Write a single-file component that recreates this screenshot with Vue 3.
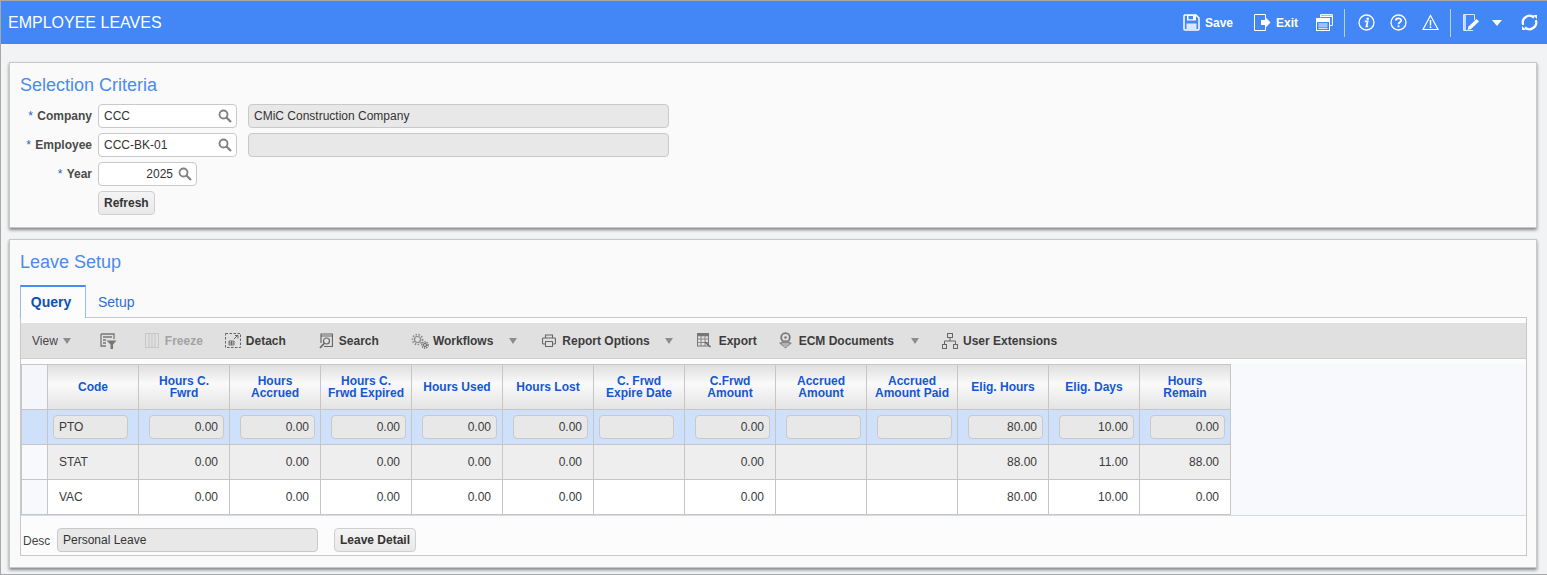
<script setup>
const cols = [
  { t: ['Code'] },
  { t: ['Hours C.', 'Fwrd'] },
  { t: ['Hours', 'Accrued'] },
  { t: ['Hours C.', 'Frwd Expired'] },
  { t: ['Hours Used'] },
  { t: ['Hours Lost'] },
  { t: ['C. Frwd', 'Expire Date'] },
  { t: ['C.Frwd', 'Amount'] },
  { t: ['Accrued', 'Amount'] },
  { t: ['Accrued', 'Amount Paid'] },
  { t: ['Elig. Hours'] },
  { t: ['Elig. Days'] },
  { t: ['Hours', 'Remain'] },
]
const rows = [
  { cls: 'sel', v: ['PTO', '0.00', '0.00', '0.00', '0.00', '0.00', '', '0.00', '', '', '80.00', '10.00', '0.00'] },
  { cls: 'alt', v: ['STAT', '0.00', '0.00', '0.00', '0.00', '0.00', '', '0.00', '', '', '88.00', '11.00', '88.00'] },
  { cls: 'plain', v: ['VAC', '0.00', '0.00', '0.00', '0.00', '0.00', '', '0.00', '', '', '80.00', '10.00', '0.00'] },
]
</script>

<template>
  <div class="page">
    <header class="top">
      <h1 class="title">EMPLOYEE LEAVES</h1>
      <div class="actions">
        <button class="act save">
          <svg width="17" height="17" viewBox="0 0 17 17"><path d="M1.700 1H13L16 4V15Q16 16 15 16H2Q1 16 1 15V1.700Z" fill="none" stroke="#fff" stroke-width="1.500"/><path d="M4 1H13V6.500H4Z" fill="#fff"/><rect x="5.500" y="2" width="4.500" height="3.300" fill="#4287f5"/><rect x="3.500" y="9.500" width="10" height="6" fill="#dbe7fd"/></svg>
          <span>Save</span>
        </button>
        <button class="act exit">
          <svg width="17" height="17" viewBox="0 0 17 17"><path d="M11.500 5V.5H.5V16.500H11.500V12" fill="none" stroke="#fff" stroke-width="1"/><path d="M7 6H11V2.800L16.500 8.500L11 14.200V11H7Z" fill="#fff"/></svg>
          <span>Exit</span>
        </button>
        <svg class="ic windows" width="17" height="17" viewBox="0 0 17 17"><path d="M4.500 3.500V.6H16.400V11.500H13.500" fill="none" stroke="#fff"/><path d="M4.500 2.300H16" stroke="#fff" stroke-width="1.500"/><rect x=".5" y="4.500" width="13" height="12" fill="#4287f5" stroke="#fff"/><path d="M.5 5.500H13.500V7.500H.5ZM2.500 10H11.500M2.500 12H11.500M2.500 14.300H11.500" fill="#fff" stroke="#fff" stroke-width="1"/></svg>
        <span class="vsep first"></span>
        <svg class="ic info" width="17" height="17" viewBox="0 0 17 17"><circle cx="8.500" cy="8.500" r="7.500" fill="none" stroke="#fff" stroke-width="1.300"/><circle cx="9.700" cy="4.700" r="1.300" fill="#fff"/><path d="M6.800 7.400H9.700L8.400 12.500H10.200" fill="none" stroke="#fff" stroke-width="1.700"/></svg>
        <svg class="ic help" width="17" height="17" viewBox="0 0 17 17"><circle cx="8.500" cy="8.500" r="7.500" fill="none" stroke="#fff" stroke-width="1.300"/><path d="M5.800 6.600C5.800 3.600 11.200 3.600 11.200 6.500C11.200 8.300 8.500 8.300 8.500 10.300" fill="none" stroke="#fff" stroke-width="1.700"/><rect x="7.600" y="11.400" width="1.800" height="1.800" fill="#fff"/></svg>
        <svg class="ic warn" width="17" height="17" viewBox="0 0 17 17"><path d="M8.500 1.500L16 15.500H1Z" fill="none" stroke="#fff" stroke-width="1.200"/><path d="M8.500 6V11.500" stroke="#fff" stroke-width="1.500"/><rect x="7.700" y="12.400" width="1.600" height="1.600" fill="#fff"/></svg>
        <span class="vsep second"></span>
        <svg class="ic note" width="17" height="17" viewBox="0 0 17 17"><path d="M10 16.500H.5V.5H11.500V6" fill="none" stroke="#dbe7fd"/><path d="M1 1H3V16H1Z" fill="#c3d8fb"/><path d="M4.500 16L5.500 12.500L13.500 5L16 7.500L8 15Z" fill="#fff"/></svg>
        <span class="caret-w"></span>
        <svg class="ic sync" width="17" height="17" viewBox="0 0 17 17"><path d="M2.200 10.800A6.700 6.700 0 0 1 13 3.600M14.800 6.200A6.700 6.700 0 0 1 4 13.400" fill="none" stroke="#fff" stroke-width="2.200"/><path d="M12 1H16V5ZM5 16H1V12Z" fill="#fff"/></svg>
      </div>
    </header>

    <main class="body">
      <section class="panel crit">
        <h2 class="heading">Selection Criteria</h2>
        <div class="form">
          <label class="lbl"><i>*</i> Company</label>
          <div class="line">
            <div class="inp lov w139"><span>CCC</span><svg class="mag" width="14" height="14" viewBox="0 0 14 14"><circle cx="5.500" cy="5.500" r="4" fill="none" stroke="#808080" stroke-width="1.800"/><path d="M8.500 8.500L13 13" stroke="#808080" stroke-width="2.200"/></svg></div>
            <div class="inp ro w421">CMiC Construction Company</div>
          </div>
          <label class="lbl"><i>*</i> Employee</label>
          <div class="line">
            <div class="inp lov w139"><span>CCC-BK-01</span><svg class="mag" width="14" height="14" viewBox="0 0 14 14"><circle cx="5.500" cy="5.500" r="4" fill="none" stroke="#808080" stroke-width="1.800"/><path d="M8.500 8.500L13 13" stroke="#808080" stroke-width="2.200"/></svg></div>
            <div class="inp ro w421"></div>
          </div>
          <label class="lbl"><i>*</i> Year</label>
          <div class="line">
            <div class="inp lov w99 num"><span>2025</span><svg class="mag" width="14" height="14" viewBox="0 0 14 14"><circle cx="5.500" cy="5.500" r="4" fill="none" stroke="#808080" stroke-width="1.800"/><path d="M8.500 8.500L13 13" stroke="#808080" stroke-width="2.200"/></svg></div>
          </div>
          <span></span>
          <div class="line"><button class="btn">Refresh</button></div>
        </div>
      </section>

      <section class="panel setup">
        <h2 class="heading">Leave Setup</h2>
        <div class="tabs">
          <div class="tab on">Query</div>
          <div class="tab">Setup</div>
        </div>
        <div class="box">
          <div class="bar">
            <span class="ti view">View <b class="caret"></b></span>
            <span class="tsep s0"></span>
            <svg class="ti tfilter" width="17" height="16" viewBox="0 0 17 16"><path d="M1 1H14V6M1 1V13H6M3 4H12M3 7H6M3 10H6" stroke="#777" stroke-width="1.300" fill="none"/><path d="M6.500 7.500H16.500L13 11.500V16H10.500V11.500Z" fill="#777"/></svg>
            <span class="tsep s3"></span>
            <span class="ti dis"><svg width="14" height="15" viewBox="0 0 14 15"><rect x=".5" y=".5" width="13" height="14" fill="none" stroke="#c8c8c8"/><path d="M4 1V14M7 1V14M10 1V14" stroke="#cdcdcd" stroke-width="1.400"/></svg>Freeze</span>
            <span class="ti det"><svg width="16" height="15" viewBox="0 0 16 15"><rect x=".5" y=".5" width="15" height="14" fill="none" stroke="#666" stroke-dasharray="2.500 1.500"/><path d="M4 8H9V12H4ZM4 10H9M6.500 8V12" fill="none" stroke="#666" stroke-width=".9"/><path d="M9 6L12.500 2.500M10 2.500H13V5.500" fill="none" stroke="#666"/></svg>Detach</span>
            <span class="tsep s1"></span>
            <span class="ti srch"><svg width="14" height="16" viewBox="0 0 14 16"><path d="M2 10V1H13.500V13.500H5" fill="none" stroke="#666" stroke-width="1.200"/><path d="M2 3H13.500" stroke="#666"/><circle cx="7.500" cy="8" r="3" fill="none" stroke="#666" stroke-width="1.200"/><path d="M5 10.500L1 15" stroke="#666" stroke-width="1.700"/></svg>Search</span>
            <span class="tsep s2"></span>
            <span class="ti wf"><svg width="18" height="16" viewBox="0 0 18 16"><g fill="none" stroke="#8a8a8a"><circle cx="6.500" cy="6.500" r="3" stroke-width="1.200"/><circle cx="6.500" cy="6.500" r="5" stroke-width="1.700" stroke-dasharray="1.500 1.500"/><circle cx="14" cy="12" r="1.500" stroke="#666"/><circle cx="14" cy="12" r="3" stroke="#666" stroke-width="1.500" stroke-dasharray="1.200 1"/></g></svg>Workflows</span>
            <b class="caret cw"></b>
            <span class="ti rep"><svg width="14" height="13" viewBox="0 0 14 13"><path d="M3.500 4V1H10.500V4M3.500 10H1.500Q.5 10 .5 9V5Q.5 4 1.500 4H12.500Q13.500 4 13.500 5V9Q13.500 10 12.500 10H10.500" fill="none" stroke="#666" stroke-width="1.100"/><rect x="3.500" y="7.500" width="7" height="5" fill="none" stroke="#666"/></svg>Report Options</span>
            <b class="caret cr"></b>
            <span class="ti exp"><svg width="14" height="15" viewBox="0 0 14 15"><rect x=".5" y=".5" width="11" height="12.500" fill="none" stroke="#777"/><path d="M.5 2H11.500" stroke="#777" stroke-width="2.500"/><path d="M4 3V13M8 3V13M1 6H11M1 9.500H11" stroke="#777" stroke-width=".8"/><path d="M8 9L13.500 14" stroke="#666" stroke-width="1.500"/></svg>Export</span>
            <span class="ti ecm"><svg width="15" height="17" viewBox="0 0 15 17"><circle cx="7.500" cy="5.500" r="4.300" fill="#e0e0e0" stroke="#777" stroke-width="1.800"/><circle cx="7.500" cy="5.500" r="1.300" fill="#777"/><path d="M1 11L7.500 8L14 11L7.500 16.500Z" fill="#888"/><path d="M4 12H11M5.500 14H9.500" stroke="#ddd"/></svg>ECM Documents</span>
            <b class="caret ce"></b>
            <span class="ti ue"><svg width="16" height="16" viewBox="0 0 16 16"><g fill="none" stroke="#666"><rect x="5.500" y=".5" width="5" height="4"/><rect x=".5" y="11.500" width="4" height="4"/><rect x="11.500" y="11.500" width="4" height="4"/><path d="M8 4.500V8M2.500 11.500V8H13.500V11.500"/></g></svg>User Extensions</span>
          </div>

          <div class="gridwrap">
            <div class="grid">
              <div class="hc corner"></div>
              <div v-for="(c, i) in cols" :key="i" class="hc"><span v-for="l in c.t" :key="l">{{ l }}</span></div>
              <template v-for="r in rows" :key="r.v[0]">
                <div class="rh" :class="{ rhsel: r.cls === 'sel' }"></div>
                <div v-for="(val, i) in r.v" :key="i" class="cell" :class="[r.cls, i === 0 || i === 6 ? 'left' : 'right']">
                  <div v-if="r.cls === 'sel'" class="ci">{{ val }}</div>
                  <template v-else>{{ val }}</template>
                </div>
              </template>
            </div>
          </div>

          <div class="foot">
            <span class="dl">Desc</span>
            <div class="inp ro w261">Personal Leave</div>
            <button class="btn ld">Leave Detail</button>
          </div>
        </div>
      </section>
    </main>
  </div>
</template>

<style scoped>
.page { width: 1547px; height: 575px; box-sizing: border-box; border-top: 1px solid #a8a8a8; border-left: 1px solid #a8a8a8; border-bottom: 1px solid #a8a8a8; background: #f2f3f5; font-family: "Liberation Sans", Arial, sans-serif; overflow: hidden; color: #333; }
.top { height: 43px; background: #4287f5; display: flex; align-items: center; justify-content: space-between; }
.title { margin: 0 0 0 7px; font-size: 16px; font-weight: 400; color: #fff; }
.actions { display: flex; align-items: center; height: 100%; position: relative; }
.act { display: flex; align-items: center; background: none; border: 0; padding: 0; color: #fff; font: bold 12px "Liberation Sans", sans-serif; }
.act span { margin-left: 5px; }
.save { margin-right: 21px; }
.exit { margin-right: 18px; }
.ic { display: block; flex: none; }
.vsep { width: 1px; height: 28px; background: #b5cffa; flex: none; }
.vsep.first { margin-left: 11px; margin-right: 13px; }
.info { margin-right: 15px; }
.help { margin-right: 15px; }
.vsep.second { margin-left: 11px; margin-right: 12px; }
.caret-w { width: 0; height: 0; border-left: 5px solid transparent; border-right: 5px solid transparent; border-top: 6px solid #fff; margin-left: 12px; margin-right: 19px; }
.sync { margin-right: 9px; }

.body { padding: 18px 10px 0 8px; display: flex; flex-direction: column; gap: 11px; }
.panel { box-sizing: border-box; background: #fafafa; border: 1px solid #c8c8c8; box-shadow: 0 2px 3px rgba(0,0,0,.45); padding: 0 10px; }
.crit { height: 166px; }
.setup { height: 329px; }
.heading { margin: 0; padding-top: 12px; font-size: 18px; font-weight: 400; color: #4a8af4; line-height: 21px; }
.form { display: grid; grid-template-columns: 72px 1fr; column-gap: 6px; row-gap: 5px; margin-top: 8px; }
.lbl { font-size: 12px; font-weight: 700; color: #4a4a4a; text-align: right; line-height: 24px; white-space: nowrap; }
.lbl i { font-style: normal; color: #1f5fc8; font-weight: 400; margin-right: 1px; }
.line { display: flex; gap: 11px; height: 24px; }
.inp { box-sizing: border-box; height: 24px; border: 1px solid #c9c9c9; border-radius: 4px; background: #fff; font-size: 12px; color: #333; line-height: 22px; padding: 0 5px; white-space: nowrap; }
.lov { display: flex; align-items: center; justify-content: space-between; padding-right: 4px; }
.num { justify-content: flex-end; gap: 5px; }
.ro { background: #e8e8e8; }
.w139 { width: 139px; }
.w99 { width: 99px; }
.w421 { width: 421px; }
.w261 { width: 261px; }
.mag { flex: none; }
.btn { box-sizing: border-box; height: 24px; border: 1px solid #cfcfcf; border-radius: 4px; background: linear-gradient(#f4f4f4, #e9e9e9); font: bold 12px "Liberation Sans", sans-serif; color: #333; padding: 0 5px; }

.tabs { display: flex; height: 32px; margin-top: 12px; }
.tab { box-sizing: border-box; font-size: 14px; color: #2c6fd0; padding: 0 12px; line-height: 34px; }
.tab.on { width: 66px; height: 33px; padding: 0 4px 0 0; text-align: center; font-weight: 700; color: #0f4fb4; border-top: 2px solid #4a8af4; border-left: 1px solid #9ab8e8; border-right: 1px solid #9ab8e8; background: #fcfcfc; line-height: 30px; position: relative; z-index: 1; }
.box { box-sizing: border-box; width: 1507px; height: 239px; border: 1px solid #c8c8c8; display: flex; flex-direction: column; background: #fcfcfc; }
.bar { height: 36px; margin-top: 5px; background: #e0e0e0; border-bottom: 1px solid #cfcfcf; box-sizing: border-box; display: flex; align-items: center; font-size: 12px; font-weight: 700; color: #3c3c3c; white-space: nowrap; flex: none; }
.ti { display: flex; align-items: center; flex: none; }
.ti svg { margin-right: 5px; }
.view { font-weight: 400; margin-left: 11px; gap: 5px; color: #444; }
.caret { display: inline-block; width: 0; height: 0; border-left: 4.500px solid transparent; border-right: 4.500px solid transparent; border-top: 6px solid #8c8c8c; flex: none; }
.tsep { width: 1px; height: 32px; background: #dbe1e8; flex: none; }
.tsep.s0 { margin-left: 14px; }
.tfilter { margin-left: 14px; }
.tsep.s3 { margin-left: 10px; }
.dis { color: #a3a3a3; margin-left: 17px; }
.dis svg { margin-right: 6px; }
.det { margin-left: 22px; }
.tsep.s1 { margin-left: 15px; }
.srch { margin-left: 17px; }
.srch svg { margin-right: 6px; }
.tsep.s2 { margin-left: 15px; }
.wf { margin-left: 16px; }
.wf svg { margin-right: 4px; }
.cw { margin-left: 16px; }
.rep { margin-left: 25px; }
.rep svg { margin-right: 6px; }
.cr { margin-left: 15px; }
.exp { margin-left: 24px; }
.exp svg { margin-right: 8px; }
.ecm { margin-left: 21px; }
.ecm svg { margin-right: 6px; }
.ce { margin-left: 17px; }
.ue { margin-left: 23px; }

.gridwrap { margin-top: 5px; height: 152px; background: #f8f9fd; border-bottom: 1px solid #d5dbe5; box-sizing: border-box; flex: none; }
.grid { display: grid; grid-template-columns: 26px repeat(13, 91px); grid-template-rows: 45px 35px 35px 35px; width: max-content; border-left: 1px solid #c6c6c6; border-top: 1px solid #c6c6c6; }
.hc { box-sizing: border-box; background: linear-gradient(#dedede, #fafafa 42%, #e4e4e4); border-right: 1px solid #c6c6c6; border-bottom: 1px solid #c6c6c6; color: #1457d2; font-size: 12px; font-weight: 700; line-height: 12px; display: flex; flex-direction: column; align-items: center; justify-content: center; text-align: center; white-space: nowrap; }
.corner { background: #f5f6fb; }
.rh { box-sizing: border-box; background: #f8f9fd; border-right: 1px solid #c6c6c6; border-bottom: 1px solid #c6c6c6; }
.rhsel { background: #cfe0fa; }
.cell { box-sizing: border-box; border-right: 1px solid #c6c6c6; border-bottom: 1px solid #c6c6c6; font-size: 12px; color: #3a3a3a; display: flex; align-items: center; }
.cell.left { padding-left: 11px; }
.cell.right { justify-content: flex-end; padding-right: 11px; }
.cell.sel { background: #cfe0fa; }
.cell.sel.left { padding: 0 10px 0 5px; }
.cell.sel.right { padding: 0 5px 0 10px; }
.alt { background: #eeeeee; }
.plain { background: #fff; }
.ci { box-sizing: border-box; width: 75px; height: 24px; border: 1px solid #c9c9c9; border-radius: 4px; background: #e8e8e8; line-height: 22px; padding: 0 5px; text-align: right; }
.left .ci { text-align: left; }
.foot { display: flex; align-items: center; height: 24px; margin-top: 12px; padding-left: 2px; }
.dl { font-size: 12px; color: #444; width: 34px; padding-top: 2px; }
.ld { margin-left: 16px; }
</style>

<style>
html, body { margin: 0; background: #f2f3f5; }
</style>
